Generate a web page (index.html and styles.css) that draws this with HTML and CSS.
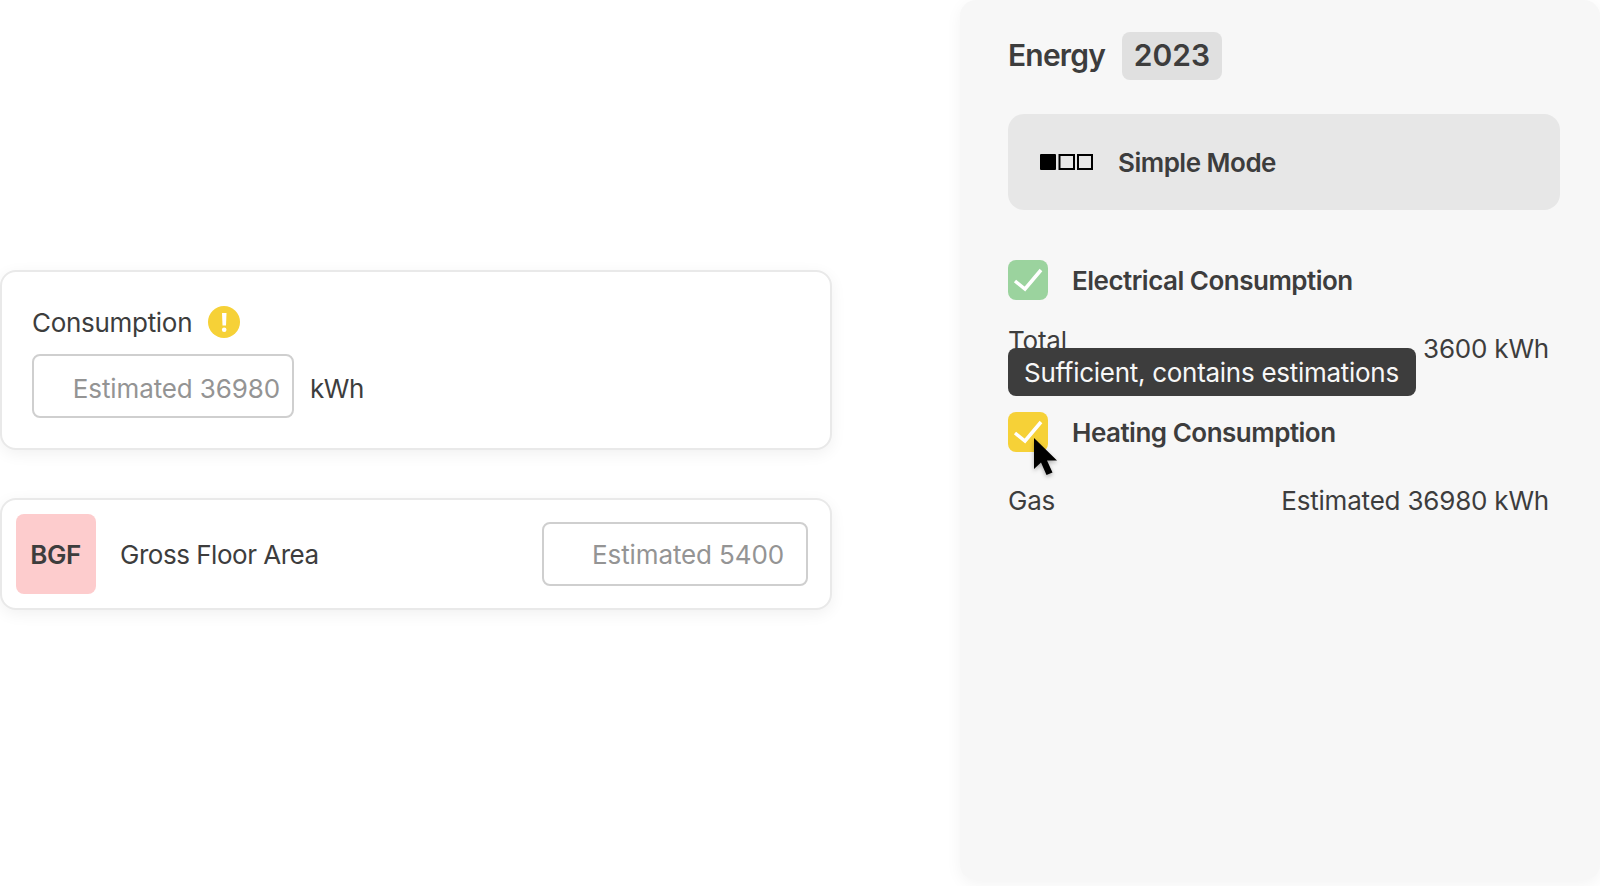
FILE: index.html
```html
<!DOCTYPE html>
<html lang="en">
<head>
  <meta charset="UTF-8" />
  <meta name="viewport" content="width=device-width, initial-scale=1.0" />
  <title>Energy 2023</title>
  <link rel="stylesheet" href="styles.css">
</head>
<body>
  <main class="forms">
    <section class="card consumption">
      <div class="label-row">
        <label for="consumption">Consumption</label>
        <svg class="warning" viewBox="0 0 32 32">
          <circle cx="16" cy="16" r="16" fill="#f6d137" />
          <path d="M14 7h4.5l-.5 12.5h-3.5z" fill="#fff" />
          <circle cx="16.2" cy="23.7" r="2.3" fill="#fff" />
        </svg>
      </div>
      <div class="input-row">
        <input type="text" id="consumption" placeholder="Estimated 36980" />
        <span>kWh</span>
      </div>
    </section>

    <section class="card area">
      <span class="tag">BGF</span>
      <label for="area">Gross Floor Area</label>
      <input type="text" id="area" placeholder="Estimated 5400" />
    </section>
  </main>

  <aside class="panel">
    <h1><span class="title">Energy</span> <span class="year">2023</span></h1>

    <div class="mode">
      <svg width="54" height="16" viewBox="0 0 54 16">
        <rect width="16" height="16" rx="1" />
        <rect x="19.5" y="1" width="14.5" height="14" fill="none" stroke="#000" stroke-width="2" />
        <rect x="38" y="1" width="14" height="14" fill="none" stroke="#000" stroke-width="2" />
      </svg>
      <span>Simple Mode</span>
    </div>

    <div class="item">
      <span class="check green">
        <svg viewBox="0 0 40 40"><path d="M7 21l10 8L33 10" /></svg>
      </span>
      <h2>Electrical Consumption</h2>
    </div>
    <div class="values total">
      <span class="name">Total</span>
      <span>3600 kWh</span>
    </div>

    <div class="item">
      <span class="check yellow">
        <svg viewBox="0 0 40 40"><path d="M7 21l10 8L33 10" /></svg>
      </span>
      <h2>Heating Consumption</h2>
      <div class="tooltip">Sufficient, contains estimations</div>
      <svg class="cursor" viewBox="0 0 23 37">
        <path d="M0 0v31l7-6.5L12.5 37l6-2.5L13 22.5h10z" />
      </svg>
    </div>
    <div class="values">
      <span class="name">Gas</span>
      <span>Estimated 36980 kWh</span>
    </div>
  </aside>
</body>
</html>
```
FILE: styles.css
```css
* {
  box-sizing: border-box;
}
body {
  margin: 0;
  height: 886px;
  display: flex;
  justify-content: space-between;
  overflow: hidden;
  font-family: Inter, sans-serif;
  font-size: 26px;
  line-height: 32px;
  letter-spacing: -0.2px;
  color: #3d3d3d;
  background: #fff;
}
.forms {
  width: 832px;
  padding-top: 270px;
}
.card {
  border: 2px solid #e9e9e9;
  border-radius: 16px;
  background: #fff;
  box-shadow: 0 4px 16px rgba(0, 0, 0, 0.06);
}
.consumption {
  height: 180px;
  padding: 34px 30px;
  margin-bottom: 48px;
}
.label-row, .input-row {
  display: flex;
  align-items: center;
  gap: 16px;
}
.label-row {
  height: 32px;
  margin-bottom: 16px;
}
label {
  padding-top: 2px;
}
.label-row label {
  width: 160px;
  letter-spacing: -0.3px;
}
.warning {
  width: 32px;
  height: 32px;
}
input {
  width: 262px;
  height: 64px;
  padding: 5px 12px 0;
  border: 2px solid #cfcfcf;
  border-radius: 8px;
  font: inherit;
  letter-spacing: -0.12px;
  text-align: right;
  background: #fff;
}
input::placeholder {
  color: #949494;
  opacity: 1;
}
.input-row span {
  padding-top: 5px;
  letter-spacing: -0.5px;
}
.area {
  display: flex;
  align-items: center;
  height: 112px;
  padding: 0 22px 0 14px;
}
.area label {
  letter-spacing: -0.48px;
}
.tag {
  width: 80px;
  height: 80px;
  margin-right: 24px;
  padding-right: 1px;
  border-radius: 8px;
  background: #fdcccd;
  font-weight: 600;
  line-height: 82px;
  letter-spacing: -0.4px;
  text-align: center;
}
.area input {
  width: 266px;
  margin-left: auto;
  padding: 0 22px;
}

.panel {
  width: 640px;
  height: 880px;
  padding: 32px 40px 0 48px;
  border-radius: 16px;
  background: #f7f7f7;
  box-shadow: 0 4px 16px rgba(0, 0, 0, 0.05);
}
h1 {
  display: flex;
  margin: 0 0 34px;
  font-size: 30px;
  font-weight: 600;
  line-height: 46px;
}
.title {
  width: 114px;
  letter-spacing: -0.8px;
}
.year {
  width: 100px;
  height: 48px;
  border-radius: 8px;
  background: #e0e0e0;
  letter-spacing: 0;
  text-align: center;
}
.mode {
  display: flex;
  align-items: center;
  gap: 24px;
  height: 96px;
  padding-left: 32px;
  margin-bottom: 50px;
  border-radius: 16px;
  background: #e7e7e7;
  font-weight: 600;
  letter-spacing: -0.5px;
}
.mode span {
  padding-top: 2px;
}
.item {
  position: relative;
  display: flex;
  align-items: center;
  gap: 24px;
  height: 40px;
}
h2 {
  margin: 0;
  padding-top: 2px;
  font-size: 26px;
  font-weight: 600;
  letter-spacing: -0.5px;
}
.check {
  width: 40px;
  height: 40px;
  border-radius: 8px;
}
.check svg {
  display: block;
}
.check path {
  fill: none;
  stroke: #fff;
  stroke-width: 3.5;
}
.green {
  background: #9bd39e;
}
.yellow {
  background: #f6d137;
}
.values {
  display: flex;
  justify-content: space-between;
  padding: 33px 11px 0 0;
}
.total {
  height: 112px;
}
.total .name {
  margin-top: -8px;
}
.tooltip {
  position: absolute;
  left: 0;
  top: -64px;
  width: 408px;
  height: 48px;
  padding-left: 16px;
  border-radius: 8px;
  background: #3d3d3d;
  color: #f7f7f7;
  line-height: 50px;
  letter-spacing: -0.28px;
  white-space: nowrap;
}
.cursor {
  position: absolute;
  left: 26px;
  top: 26px;
  width: 23px;
  height: 37px;
  overflow: visible;
  filter: drop-shadow(0 2px 2px rgba(0, 0, 0, 0.3));
}
```
